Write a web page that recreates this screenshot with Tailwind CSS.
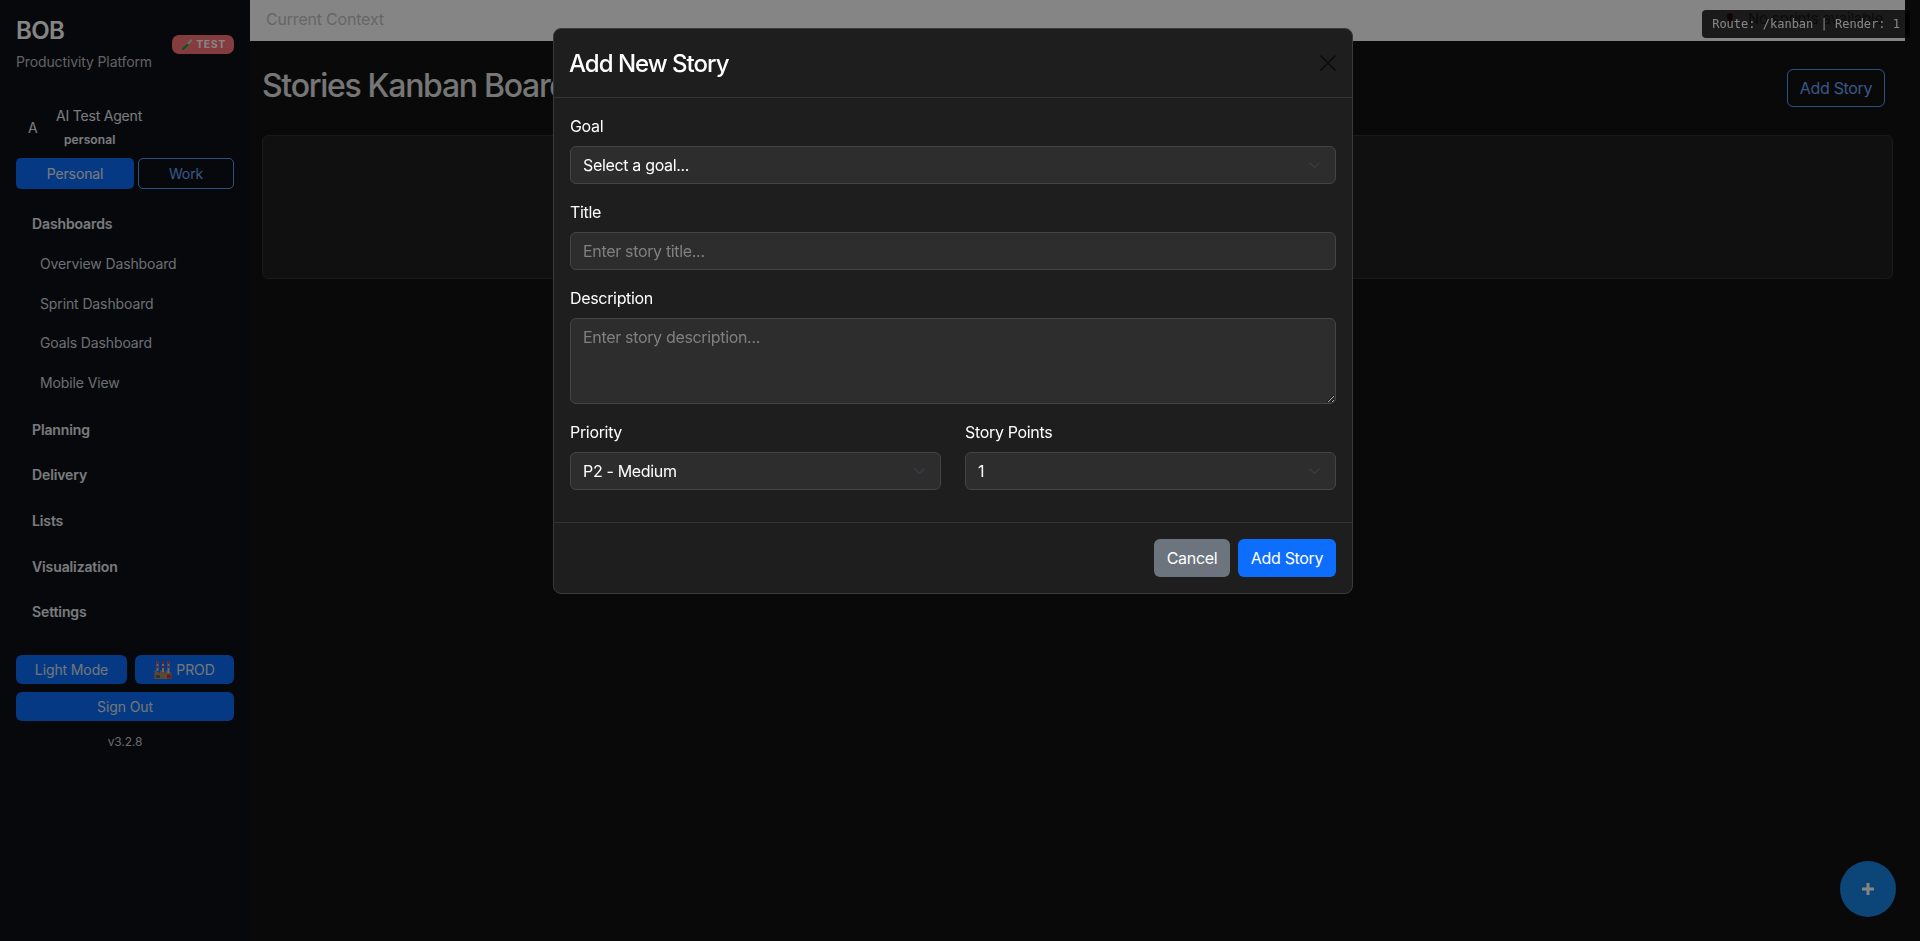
<!DOCTYPE html>
<html lang="en">
<head>
  <meta charset="UTF-8">
  <meta name="viewport" content="width=device-width, initial-scale=1.0">
  <title>BOB - Stories Kanban Board</title>
  <script src="https://cdn.jsdelivr.net/npm/@tailwindcss/browser@4"></script>
</head>
<body class="h-[941px] overflow-hidden bg-[#131313] font-['Inter',sans-serif] text-white">
  <div class="flex h-[941px]">
    <!-- Sidebar -->
    <aside class="w-[250px] shrink-0 bg-[#0f1118] px-4 pt-4 tracking-[-0.12px] text-[#e9ecef]">
      <div class="flex items-start justify-between">
        <div>
          <h1 class="text-[24px] leading-[30px] font-semibold tracking-[-0.6px] text-white">BOB</h1>
          <p class="mt-[6px] text-[14px] leading-[20px] text-[#bbb]">Productivity Platform</p>
        </div>
        <span class="mt-[19px] flex h-[19px] w-[62px] items-center justify-center gap-[3px] rounded-[7px] bg-[#ff747a] text-[10.5px] font-bold tracking-[0.6px] text-white">
          <svg class="h-[13px] w-[13px]" viewBox="0 0 13 13"><path d="M11 1 L2.5 10 Q1.5 11.5 2.3 12 Q3.3 12.5 4.5 11.3 L12.3 2.5 Z" fill="#c8d8c8"/><path d="M7 5.5 L2.5 10 Q1.5 11.5 2.3 12 Q3.3 12.5 4.5 11.3 L9 6.8 Z" fill="#14a032"/></svg>
          TEST
        </span>
      </div>
      <div class="mt-[34px] flex items-center pl-3">
        <span class="w-7 text-[14px]">A</span>
        <div>
          <p class="text-[14px] leading-[20px] tracking-[-0.2px]">AI Test Agent</p>
          <p class="mt-[6px] ml-2 text-[12px] leading-[16px] font-semibold tracking-[0.1px]">personal</p>
        </div>
      </div>
      <div class="mt-[10px] flex gap-1">
        <button class="h-[31px] w-[118px] rounded-[5px] bg-[#0d6efd] text-[14px]">Personal</button>
        <button class="h-[31px] w-[96px] rounded-[5px] border border-[#5b9cf5] text-[14px] text-[#6ea8fe]">Work</button>
      </div>
      <nav class="mt-[25px] text-[14px]">
        <div class="pl-4 leading-[20px] font-semibold">Dashboards</div>
        <ul class="mt-[20px] flex flex-col gap-[19.5px] pl-6 text-[#ced4da]">
          <li class="leading-[20px]">Overview Dashboard</li>
          <li class="leading-[20px]">Sprint Dashboard</li>
          <li class="leading-[20px]">Goals Dashboard</li>
          <li class="leading-[20px]">Mobile View</li>
        </ul>
        <div class="mt-[27px] flex flex-col gap-[25.7px] pl-4 font-semibold">
          <div class="leading-[20px]">Planning</div>
          <div class="leading-[20px]">Delivery</div>
          <div class="leading-[20px]">Lists</div>
          <div class="leading-[20px]">Visualization</div>
          <div class="leading-[20px]">Settings</div>
        </div>
      </nav>
      <div class="mt-[33px] flex gap-2">
        <button class="h-[29px] w-[111px] rounded-[6px] bg-[#0d6efd] text-[14px] text-[#dee2e6]">Light Mode</button>
        <button class="flex h-[29px] w-[99px] items-center justify-center gap-1 rounded-[6px] bg-[#0d6efd] text-[14px] text-[#dee2e6]">
          <svg class="h-[20px] w-[18px]" viewBox="0 0 18 20">
            <path d="M0.5 19V10l5.5 3v-3l5.5 3v-3l6 3v6z" fill="#b08a5a"/>
            <rect x="2.5" y="1" width="2" height="10" fill="#c9c9c9"/><rect x="8" y="1" width="2" height="11" fill="#c9c9c9"/><rect x="13.5" y="1" width="2" height="12" fill="#c9c9c9"/>
            <rect x="2.5" y="1" width="2" height="3" fill="#e53935"/><rect x="8" y="1" width="2" height="3" fill="#e53935"/><rect x="13.5" y="1" width="2" height="3" fill="#e53935"/>
            <rect x="2.5" y="6" width="2" height="2" fill="#e53935"/><rect x="8" y="6" width="2" height="2" fill="#e53935"/><rect x="13.5" y="6" width="2" height="2" fill="#e53935"/>
            <rect x="2" y="15" width="4" height="3" fill="#5d5d5d"/><rect x="7.5" y="15" width="4" height="3" fill="#8f8f8f"/><rect x="13" y="14.5" width="4" height="4" fill="#d32f2f"/>
          </svg>
          PROD
        </button>
      </div>
      <button class="mt-2 h-[29px] w-[218px] rounded-[6px] bg-[#0d6efd] text-[14px] text-[#dee2e6]">Sign Out</button>
      <p class="mt-[13px] text-center text-[12px] leading-[16px] text-[#ccc]">v3.2.8</p>
    </aside>

    <!-- Main -->
    <div class="w-[1655px] shrink-0">
      <header class="flex h-[41px] items-center justify-between bg-white pr-[22px] pb-[3px] pl-4 text-[16px] tracking-[-0.2px] text-[#c4c4c4]">
        <span>Current Context</span>
        <span class="flex items-center gap-[14px] text-[15px] text-[#6c757d]">
          <svg class="h-[14px] w-[8px]" viewBox="0 0 8 14"><path d="M4 1a3 3 0 0 1 3 3c0 2-3 9-3 9S1 6 1 4a3 3 0 0 1 3-3z" fill="#d32f2f"/></svg>
          No sprints available
        </span>
      </header>
      <main class="px-3 pt-7">
        <div class="flex items-start justify-between pr-2">
          <h2 class="text-[32px] leading-[34px] font-medium tracking-[-1.3px] text-[#e2e2e2]">Stories Kanban Board</h2>
          <button class="h-[38px] w-[98px] rounded-[6px] border border-[#5b9cf5] text-[16px] tracking-[-0.33px] text-[#6ea8fe]">Add Story</button>
        </div>
        <div class="mt-[28px] h-[144px] w-[1631px] rounded-[6px] border border-[#333] bg-[#1f1f1f]"></div>
      </main>
    </div>
  </div>

  <!-- Debug tag -->
  <div class="fixed top-[10px] right-[10px] flex h-[28px] items-center rounded-[4px] bg-black/80 px-[10px] font-['DejaVu_Sans_Mono',monospace] text-[12px] text-white">Route: /kanban | Render: 1</div>

  <!-- FAB -->
  <button class="fixed right-[24px] bottom-[24px] flex h-14 w-14 items-center justify-center rounded-full bg-[#1886e6]">
    <svg class="h-[14px] w-[14px]" viewBox="0 0 14 14"><path d="M7 1v12M1 7h12" stroke="#fff" stroke-width="3"/></svg>
  </button>

  <!-- Backdrop -->
  <div class="fixed inset-0 bg-black/48"></div>

  <!-- Modal -->
  <div class="fixed top-[28px] left-[553px] w-[800px] rounded-[8px] border border-[#3a3a3a] bg-[#1e1e1e] tracking-[-0.33px]">
    <div class="flex h-[69px] items-center justify-between border-b border-[#333] px-4">
      <h3 class="-ml-px text-[24px] leading-[29px] font-medium tracking-[-1px]">Add New Story</h3>
      <svg class="h-[16px] w-[16px]" viewBox="0 0 16 16"><path d="M0.5 0.5l15 15M15.5 0.5l-15 15" stroke="#0d0d0d" stroke-width="1.6"/></svg>
    </div>
    <form class="px-4 pt-4 pb-[32px]">
      <label class="block text-[16px] leading-[24px]">Goal</label>
      <div class="mt-2 flex h-[38px] items-center justify-between rounded-[6px] border border-[#444] bg-[#2d2d2d] pr-[15px] pl-3">
        <span>Select a goal...</span>
        <svg class="h-[6px] w-[11px]" viewBox="0 0 11 6"><path d="M0.5 0.5l5 5 5-5" fill="none" stroke="#383c46" stroke-width="1.3"/></svg>
      </div>
      <label class="mt-4 block text-[16px] leading-[24px]">Title</label>
      <input class="mt-2 block h-[38px] w-full rounded-[6px] border border-[#444] bg-[#2d2d2d] px-3 placeholder-[#808080]" placeholder="Enter story title...">
      <label class="mt-4 block text-[16px] leading-[24px]">Description</label>
      <textarea class="mt-2 block h-[86px] w-full rounded-[6px] border border-[#444] bg-[#2d2d2d] px-3 py-[6px] placeholder-[#808080]" placeholder="Enter story description..."></textarea>
      <div class="mt-4 grid grid-cols-2 gap-6">
        <div>
          <label class="block text-[16px] leading-[24px]">Priority</label>
          <div class="mt-2 flex h-[38px] items-center justify-between rounded-[6px] border border-[#444] bg-[#2d2d2d] pr-[15px] pl-3">
            <span>P2 - Medium</span>
            <svg class="h-[6px] w-[11px]" viewBox="0 0 11 6"><path d="M0.5 0.5l5 5 5-5" fill="none" stroke="#383c46" stroke-width="1.3"/></svg>
          </div>
        </div>
        <div>
          <label class="block text-[16px] leading-[24px]">Story Points</label>
          <div class="mt-2 flex h-[38px] items-center justify-between rounded-[6px] border border-[#444] bg-[#2d2d2d] pr-[15px] pl-3">
            <span>1</span>
            <svg class="h-[6px] w-[11px]" viewBox="0 0 11 6"><path d="M0.5 0.5l5 5 5-5" fill="none" stroke="#383c46" stroke-width="1.3"/></svg>
          </div>
        </div>
      </div>
    </form>
    <div class="flex h-[71px] items-center justify-end gap-2 border-t border-[#333] px-4">
      <button class="h-[38px] w-[76px] rounded-[6px] bg-[#6c757d] text-white">Cancel</button>
      <button class="h-[38px] w-[98px] rounded-[6px] bg-[#0d6efd] text-white">Add Story</button>
    </div>
  </div>
</body>
</html>
